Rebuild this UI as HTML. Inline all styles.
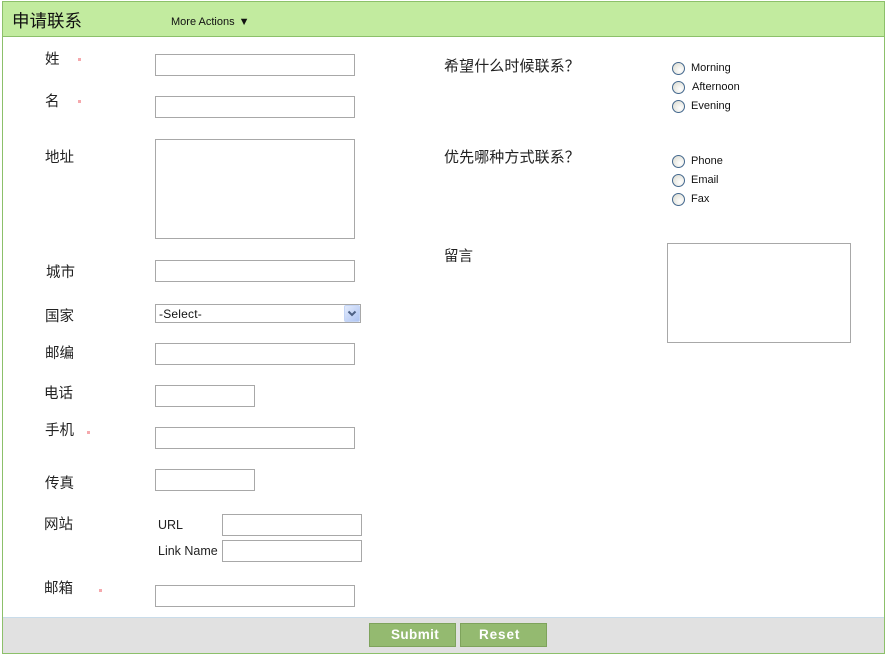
<!DOCTYPE html>
<html><head><meta charset="utf-8"><style>
html,body{margin:0;padding:0;background:#fff;width:888px;height:656px;overflow:hidden}
body{position:relative;font-family:"Liberation Sans","WenQuanYi Zen Hei","Noto Sans CJK SC",sans-serif;color:#1a1a1a}
div{position:absolute;box-sizing:border-box}
.b{border:1px solid #a8a8a8;background:#fff}
.l{font-size:14.5px;line-height:16px;white-space:nowrap;color:#222;margin-top:1px}
.q{font-size:15px;letter-spacing:.1px}
.u{font-size:12.5px;line-height:16px;white-space:nowrap;color:#222}
.s{font-size:11px;line-height:13px;white-space:nowrap;color:#111;margin-top:1px}
.r{width:13px;height:13px;border-radius:50%;border:1px solid #44688e;background:radial-gradient(circle at 65% 65%,#fff,#e4e4dc 70%)}
.a{width:3px;height:3px;background:#e8404a;opacity:.45}
.btn{top:623px;height:24px;background:#94ba70;border:1px solid #7ea35c;color:#fff;font:bold 13.5px/22px "Liberation Sans",sans-serif;letter-spacing:.4px;white-space:nowrap}
</style></head><body>
<div style="left:2px;top:1px;width:883px;height:653px;border:1px solid #8cc06a"></div>
<div style="left:3px;top:2px;width:881px;height:35px;background:#c2eb9f;border-bottom:1px solid #8cc06a"></div>
<div style="left:12px;top:11px;font-size:17.5px;line-height:20px;color:#111;white-space:nowrap">申请联系</div>
<div class="s" style="left:171px;top:15px">More Actions <span style="font-size:11px;margin-left:1px">▼</span></div>

<div class="l" style="left:45px;top:51px">姓</div><div class="a" style="left:78px;top:58px"></div>
<div class="b" style="left:155px;top:54px;width:200px;height:22px"></div>
<div class="l" style="left:45px;top:93px">名</div><div class="a" style="left:78px;top:100px"></div>
<div class="b" style="left:155px;top:96px;width:200px;height:22px"></div>
<div class="l" style="left:45px;top:149px">地址</div>
<div class="b" style="left:155px;top:139px;width:200px;height:100px"></div>
<div class="l" style="left:46px;top:264px">城市</div>
<div class="b" style="left:155px;top:260px;width:200px;height:22px"></div>
<div class="l" style="left:45px;top:308px">国家</div>
<div class="b" style="left:155px;top:304px;width:206px;height:19px"></div>
<div class="s" style="left:159px;top:307px;font-size:12px;letter-spacing:.2px">-Select-</div>
<div style="left:344px;top:305px;width:16px;height:17px;background:linear-gradient(135deg,#e3ebfc,#aec4f3);border:1px solid #c4d5f6;border-radius:2px"></div>
<svg style="position:absolute;left:347px;top:310px" width="10" height="7"><path d="M1.5 1.5L5 5L8.5 1.5" fill="none" stroke="#4d6185" stroke-width="2"/></svg>
<div class="l" style="left:45px;top:345px">邮编</div>
<div class="b" style="left:155px;top:343px;width:200px;height:22px"></div>
<div class="l" style="left:44px;top:385px">电话</div>
<div class="b" style="left:155px;top:385px;width:100px;height:22px"></div>
<div class="l" style="left:45px;top:422px">手机</div><div class="a" style="left:87px;top:431px"></div>
<div class="b" style="left:155px;top:427px;width:200px;height:22px"></div>
<div class="l" style="left:45px;top:475px">传真</div>
<div class="b" style="left:155px;top:469px;width:100px;height:22px"></div>
<div class="l" style="left:44px;top:516px">网站</div>
<div class="u" style="left:158px;top:517px">URL</div>
<div class="b" style="left:222px;top:514px;width:140px;height:22px"></div>
<div class="u" style="left:158px;top:543px">Link Name</div>
<div class="b" style="left:222px;top:540px;width:140px;height:22px"></div>
<div class="l" style="left:44px;top:580px">邮箱</div><div class="a" style="left:99px;top:589px"></div>
<div class="b" style="left:155px;top:585px;width:200px;height:22px"></div>

<div class="l q" style="left:444px;top:58px">希望什么时候联系？</div>
<div class="r" style="left:672px;top:62px"></div><div class="s" style="left:691px;top:61px">Morning</div>
<div class="r" style="left:672px;top:81px"></div><div class="s" style="left:692px;top:80px">Afternoon</div>
<div class="r" style="left:672px;top:100px"></div><div class="s" style="left:691px;top:99px">Evening</div>
<div class="l q" style="left:444px;top:149px">优先哪种方式联系？</div>
<div class="r" style="left:672px;top:155px"></div><div class="s" style="left:691px;top:154px">Phone</div>
<div class="r" style="left:672px;top:174px"></div><div class="s" style="left:691px;top:173px">Email</div>
<div class="r" style="left:672px;top:193px"></div><div class="s" style="left:691px;top:192px">Fax</div>
<div class="l" style="left:444px;top:248px">留言</div>
<div class="b" style="left:667px;top:243px;width:184px;height:100px"></div>

<div style="left:3px;top:617px;width:881px;height:36px;background:#e1e1e1;border-top:1px solid #c9dcea"></div>
<div class="btn" style="left:369px;width:87px;padding-left:21px">Submit</div>
<div class="btn" style="left:460px;width:87px;padding-left:18px;letter-spacing:.9px">Reset</div>
</body></html>
